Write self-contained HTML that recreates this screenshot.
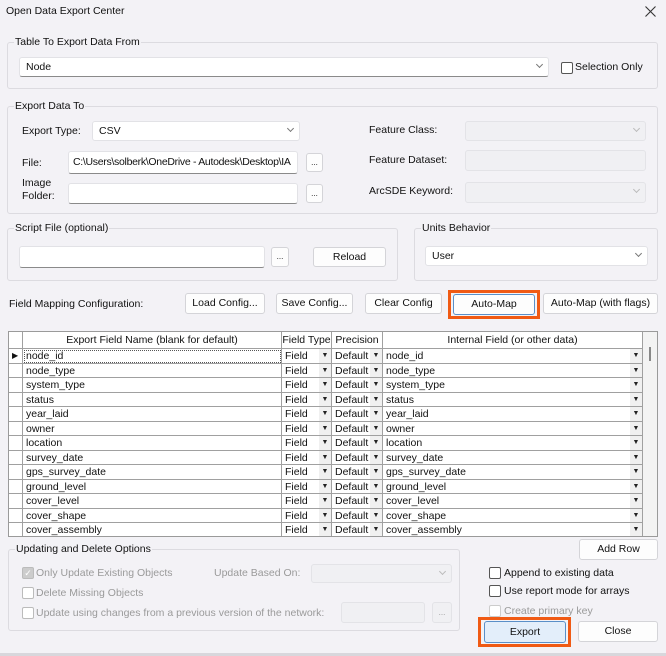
<!DOCTYPE html>
<html><head><style>
*{box-sizing:border-box;margin:0;padding:0}
body{width:666px;height:656px;background:#f3f2f6;font-family:"Liberation Sans",sans-serif;font-size:10.5px;color:#111;position:relative;overflow:hidden}
.a{position:absolute;white-space:nowrap}
.grp{position:absolute;border:1px solid #dcdbe0;border-radius:3px}
.lg{position:absolute;background:#f3f2f6;padding:0 1px;top:-7px;left:6px;line-height:13px}
.inp{position:absolute;background:#fff;border:1px solid #e2e2e6;border-bottom:1px solid #8a8a8a;border-radius:3px;padding-left:6px;line-height:18px;white-space:nowrap;overflow:hidden}
.dis{position:absolute;background:#f0f0f3;border:1px solid #e3e3e7;border-radius:3px}
.btn{position:absolute;background:#fdfdfd;border:1px solid #d4d4d8;border-radius:3px;text-align:center;line-height:18px}
.chev{position:absolute;right:6px;top:4px;width:5px;height:5px;border-right:1px solid #777;border-bottom:1px solid #777;transform:rotate(45deg)}
.cb{position:absolute;width:12px;height:12px;border:1px solid #555;border-radius:2px;background:#fff}
.gt{position:absolute;left:8px;top:331px;width:650px;height:206px;background:#fff;border:1px solid #9a9a9a;overflow:hidden}
.hd{position:absolute;top:0;height:17px;border-right:1px solid #a0a0a0;border-bottom:1px solid #a0a0a0;text-align:center;line-height:16px;background:#fff}
.c{position:absolute;height:14.5px;border-right:1px solid #a0a0a0;border-bottom:1px solid #a0a0a0;line-height:14px;padding-left:3px;overflow:hidden;white-space:nowrap}
.dd{position:absolute;right:0;top:0;width:12px;height:14px;background:#f0f0f0;font-size:7px;text-align:center;line-height:14px;color:#222}
.grey{color:#9a9a9a}
</style></head><body>
<div class="a" style="left:6px;top:5px">Open Data Export Center</div>
<svg class="a" style="left:645px;top:6px" width="11" height="11" viewBox="0 0 11 11"><path d="M0.5 0.5L10.5 10.5M10.5 0.5L0.5 10.5" stroke="#333" stroke-width="1.1"/></svg>

<div class="grp" style="left:7px;top:42px;width:651px;height:47px"><div class="lg">Table To Export Data From</div></div>
<div class="inp" style="left:19px;top:57px;width:530px;height:20px">Node<div class="chev"></div></div>
<div class="cb" style="left:561px;top:62px"></div>
<div class="a" style="left:575px;top:61px">Selection Only</div>

<div class="grp" style="left:7px;top:106px;width:651px;height:108px"><div class="lg">Export Data To</div></div>
<div class="a" style="left:22px;top:125px">Export Type:</div>
<div class="inp" style="left:92px;top:121px;width:208px;height:20px;border-bottom-color:#e2e2e6">CSV<div class="chev"></div></div>
<div class="a" style="left:22px;top:157px">File:</div>
<div class="inp" style="left:68px;top:151px;width:230px;height:23px;line-height:20px;padding-left:4px;letter-spacing:-0.3px">C:\Users\solberk\OneDrive - Autodesk\Desktop\IA</div>
<div class="btn" style="left:306px;top:153px;width:17px;height:19px;font-size:8px">...</div>
<div class="a" style="left:22px;top:177px;line-height:13px">Image<br>Folder:</div>
<div class="inp" style="left:68px;top:183px;width:230px;height:21px"></div>
<div class="btn" style="left:306px;top:184px;width:17px;height:19px;font-size:8px">...</div>
<div class="a" style="left:369px;top:124px">Feature Class:</div>
<div class="dis" style="left:465px;top:121px;width:181px;height:20px"><div class="chev" style="border-color:#bbb"></div></div>
<div class="a" style="left:369px;top:154px">Feature Dataset:</div>
<div class="dis" style="left:465px;top:150px;width:181px;height:21px"></div>
<div class="a" style="left:369px;top:185px">ArcSDE Keyword:</div>
<div class="dis" style="left:465px;top:182px;width:181px;height:21px"><div class="chev" style="border-color:#bbb"></div></div>

<div class="grp" style="left:7px;top:228px;width:391px;height:53px"><div class="lg">Script File (optional)</div></div>
<div class="inp" style="left:19px;top:246px;width:246px;height:22px"></div>
<div class="btn" style="left:271px;top:247px;width:18px;height:20px;font-size:8px">...</div>
<div class="btn" style="left:313px;top:247px;width:73px;height:20px">Reload</div>
<div class="grp" style="left:414px;top:228px;width:244px;height:53px"><div class="lg">Units Behavior</div></div>
<div class="inp" style="left:425px;top:246px;width:223px;height:20px;border-bottom-color:#e2e2e6">User<div class="chev"></div></div>

<div class="a" style="left:9px;top:298px">Field Mapping Configuration:</div>
<div class="btn" style="left:185px;top:293px;width:80px;height:21px">Load Config...</div>
<div class="btn" style="left:276px;top:293px;width:77px;height:21px">Save Config...</div>
<div class="btn" style="left:365px;top:293px;width:77px;height:21px">Clear Config</div>
<div class="a" style="left:448px;top:290px;width:92px;height:29px;border:3px solid #f05a14"></div>
<div class="btn" style="left:453px;top:294px;width:82px;height:21px;border-color:#5a8fc8">Auto-Map</div>
<div class="btn" style="left:543px;top:293px;width:115px;height:21px">Auto-Map (with flags)</div>

<div class="gt">
<div class="hd" style="left:0;width:14px"></div>
<div class="hd" style="left:14px;width:259px">Export Field Name (blank for default)</div>
<div class="hd" style="left:273px;width:50px">Field Type</div>
<div class="hd" style="left:323px;width:51px">Precision</div>
<div class="hd" style="left:374px;width:260px">Internal Field (or other data)</div>
<div style="position:absolute;left:634px;top:0;width:16px;height:206px;background:#f3f3f3"></div>
<div style="position:absolute;left:640px;top:15px;width:2px;height:14px;background:#888"></div>
<div id="rows"></div>
</div>
<script>
var n=["node_id","node_type","system_type","status","year_laid","owner","location","survey_date","gps_survey_date","ground_level","cover_level","cover_shape","cover_assembly"];
var h="";
n.forEach(function(v,i){var t=17+i*14.5;
h+='<div class="c" style="left:0;top:'+t+'px;width:14px;background:#fff;font-size:8px;padding-left:3px">'+(i==0?'▶':'')+'</div>';
h+='<div class="c" style="left:14px;top:'+t+'px;width:259px'+(i==0?';outline:1px dotted #555;outline-offset:-2px':'')+'">'+v+'</div>';
h+='<div class="c" style="left:273px;top:'+t+'px;width:50px">Field<div class="dd">▼</div></div>';
h+='<div class="c" style="left:323px;top:'+t+'px;width:51px">Default<div class="dd">▼</div></div>';
h+='<div class="c" style="left:374px;top:'+t+'px;width:260px">'+v+'<div class="dd">▼</div></div>';});
document.getElementById("rows").outerHTML=h;
</script>

<div class="grp" style="left:8px;top:549px;width:452px;height:82px"><div class="lg">Updating and Delete Options</div></div>
<div class="cb" style="left:22px;top:567px;background:#ccc;border-color:#bbb;color:#fff;font-size:9px;line-height:10px;text-align:center">✓</div>
<div class="a grey" style="left:36px;top:567px">Only Update Existing Objects</div>
<div class="a grey" style="left:214px;top:567px">Update Based On:</div>
<div class="dis" style="left:311px;top:564px;width:141px;height:19px"><div class="chev" style="border-color:#bbb"></div></div>
<div class="cb" style="left:22px;top:587px;border-color:#bbb"></div>
<div class="a grey" style="left:36px;top:587px">Delete Missing Objects</div>
<div class="cb" style="left:22px;top:607px;border-color:#bbb"></div>
<div class="a grey" style="left:36px;top:607px">Update using changes from a previous version of the network:</div>
<div class="dis" style="left:341px;top:602px;width:84px;height:21px"></div>
<div class="dis" style="left:432px;top:602px;width:20px;height:21px;text-align:center;font-size:8px;color:#999;line-height:20px">...</div>

<div class="btn" style="left:579px;top:539px;width:79px;height:21px">Add Row</div>
<div class="cb" style="left:489px;top:567px"></div>
<div class="a" style="left:504px;top:567px">Append to existing data</div>
<div class="cb" style="left:489px;top:585px"></div>
<div class="a" style="left:504px;top:585px">Use report mode for arrays</div>
<div class="cb" style="left:489px;top:605px;border-color:#ccc"></div>
<div class="a grey" style="left:504px;top:605px">Create primary key</div>
<div class="a" style="left:478px;top:617px;width:93px;height:30px;border:3px solid #f05a14"></div>
<div class="btn" style="left:484px;top:621px;width:82px;height:22px;background:#e3eefa;border-color:#5a8fc8;line-height:20px">Export</div>
<div class="btn" style="left:578px;top:621px;width:80px;height:21px">Close</div>
<div class="a" style="left:0;top:653px;width:666px;height:3px;background:#d8d7dc"></div>
</body></html>
